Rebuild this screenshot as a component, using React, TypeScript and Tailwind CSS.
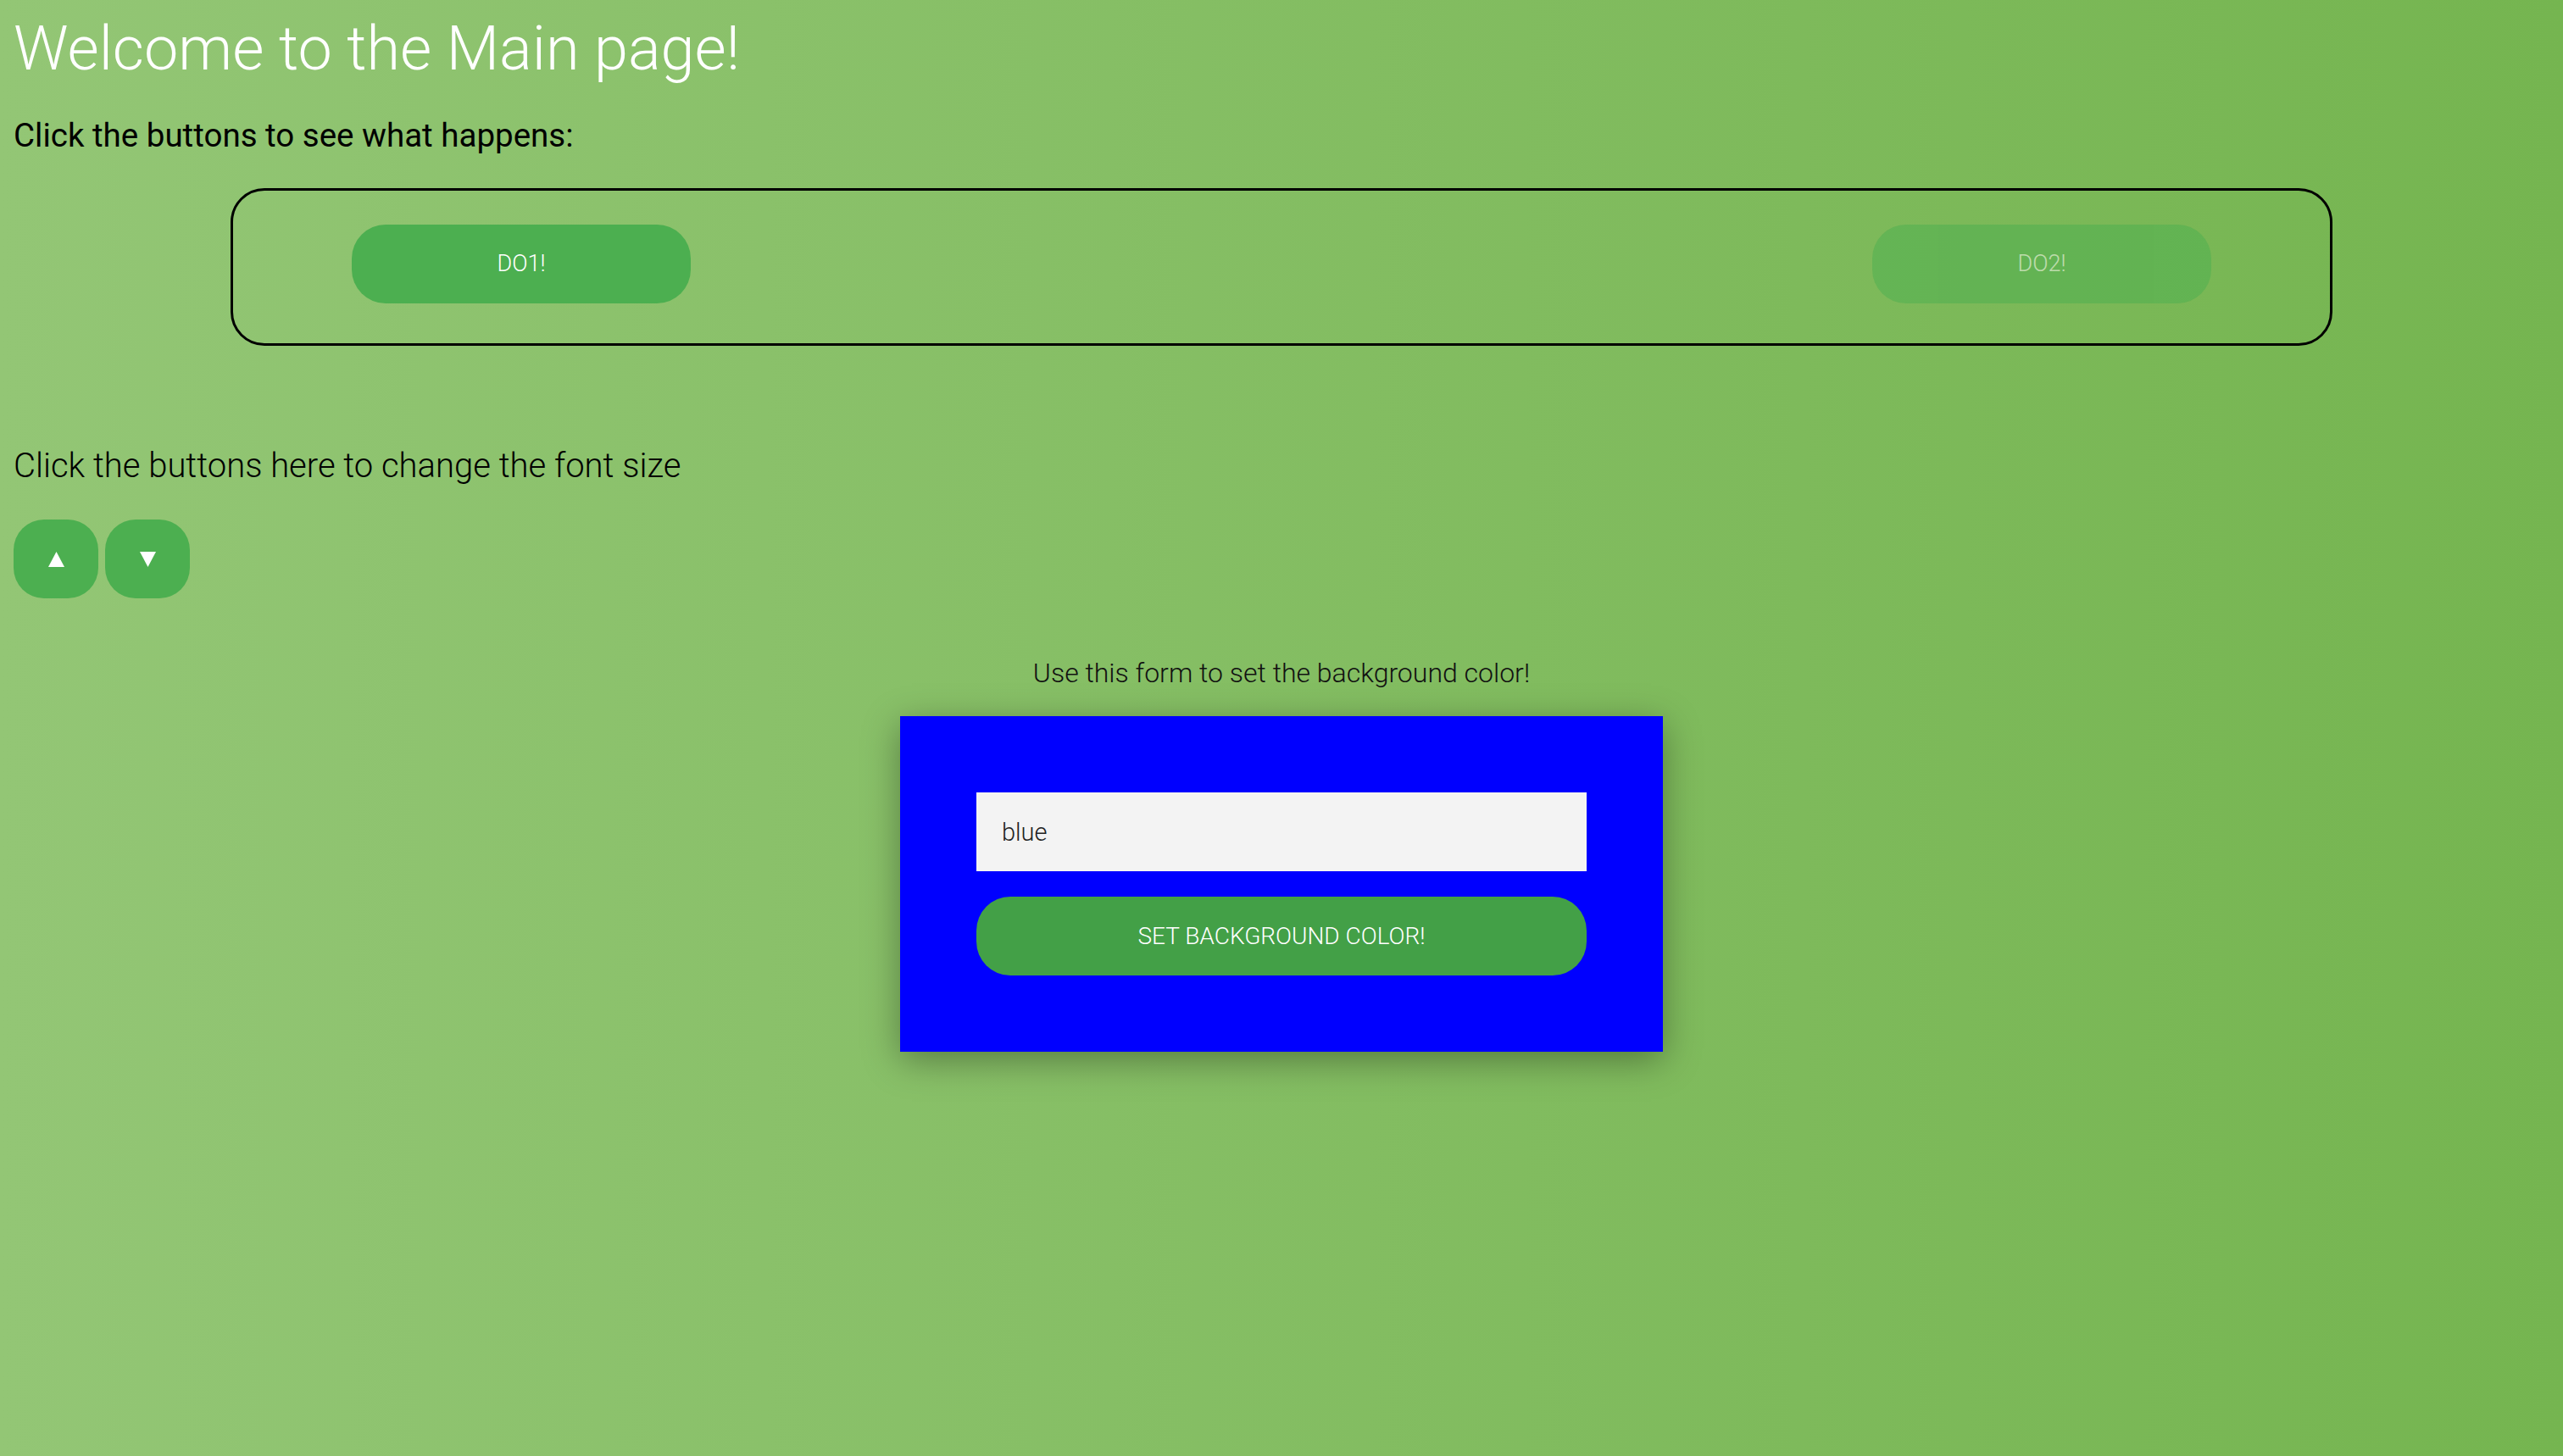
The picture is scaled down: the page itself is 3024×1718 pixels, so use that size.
import React, { useState } from 'react';

const font = { fontFamily: 'Roboto, "Liberation Sans", sans-serif' };

function Triangle({ down }: { down?: boolean }) {
  return (
    <svg width="19" height="18" viewBox="0 0 19 18" fill="white">
      {down ? <path d="M0 0H19L9.5 18Z" /> : <path d="M9.5 0L19 18H0Z" />}
    </svg>
  );
}

export default function App() {
  const [color, setColor] = useState('blue');

  return (
    <div
      style={font}
      className="min-h-[1718px] w-full bg-[linear-gradient(to_right,#93c675,#75b550)] pl-4 pt-[16px]"
    >
      <h1 className="text-[72px] font-light leading-[84px] text-white">Welcome to the Main page!</h1>
      <p className="mt-[37px] text-[38.5px] font-normal leading-[45px] text-black">
        Click the buttons to see what happens:
      </p>

      <div className="mt-[40px] -ml-4 flex justify-center">
        <div className="flex h-[186px] w-[2480px] items-center justify-between rounded-[40px] border-[3px] border-black px-[140px] pb-[7px]">
          <button className="h-[93px] w-[400px] rounded-[40px] bg-[#4caf50] text-[27px] font-light text-white">
            DO1!
          </button>
          <button
            disabled
            className="h-[93px] w-[400px] rounded-[40px] bg-[#4caf50] text-[27px] font-light text-white opacity-50"
          >
            DO2!
          </button>
        </div>
      </div>

      <p className="mt-[118px] text-[40px] font-light leading-[47px] text-black">
        Click the buttons here to change the font size
      </p>
      <div className="mt-[40px] flex gap-2">
        <button className="flex h-[93px] w-[100px] items-center justify-center rounded-[36px] bg-[#4caf50]">
          <Triangle />
        </button>
        <button className="flex h-[93px] w-[100px] items-center justify-center rounded-[36px] bg-[#4caf50]">
          <Triangle down />
        </button>
      </div>

      <div className="-ml-4 mt-[70px] flex flex-col items-center">
        <p className="text-[32px] font-light leading-[37px] text-[#111]">
          Use this form to set the background color!
        </p>
        <div className="mt-[32px] flex w-[900px] flex-col gap-[30px] bg-[#0000ff] p-[90px] shadow-[0_10px_40px_rgba(0,0,0,0.35)]">
          <input
            value={color}
            onChange={(e) => setColor(e.target.value)}
            style={font}
            className="h-[93px] w-full bg-[#f3f3f3] px-[30px] text-[29px] font-light text-[#222] outline-none"
          />
          <button className="h-[93px] w-full rounded-[40px] bg-[#43a047] text-[28px] font-light text-white">
            SET BACKGROUND COLOR!
          </button>
        </div>
      </div>
    </div>
  );
}
